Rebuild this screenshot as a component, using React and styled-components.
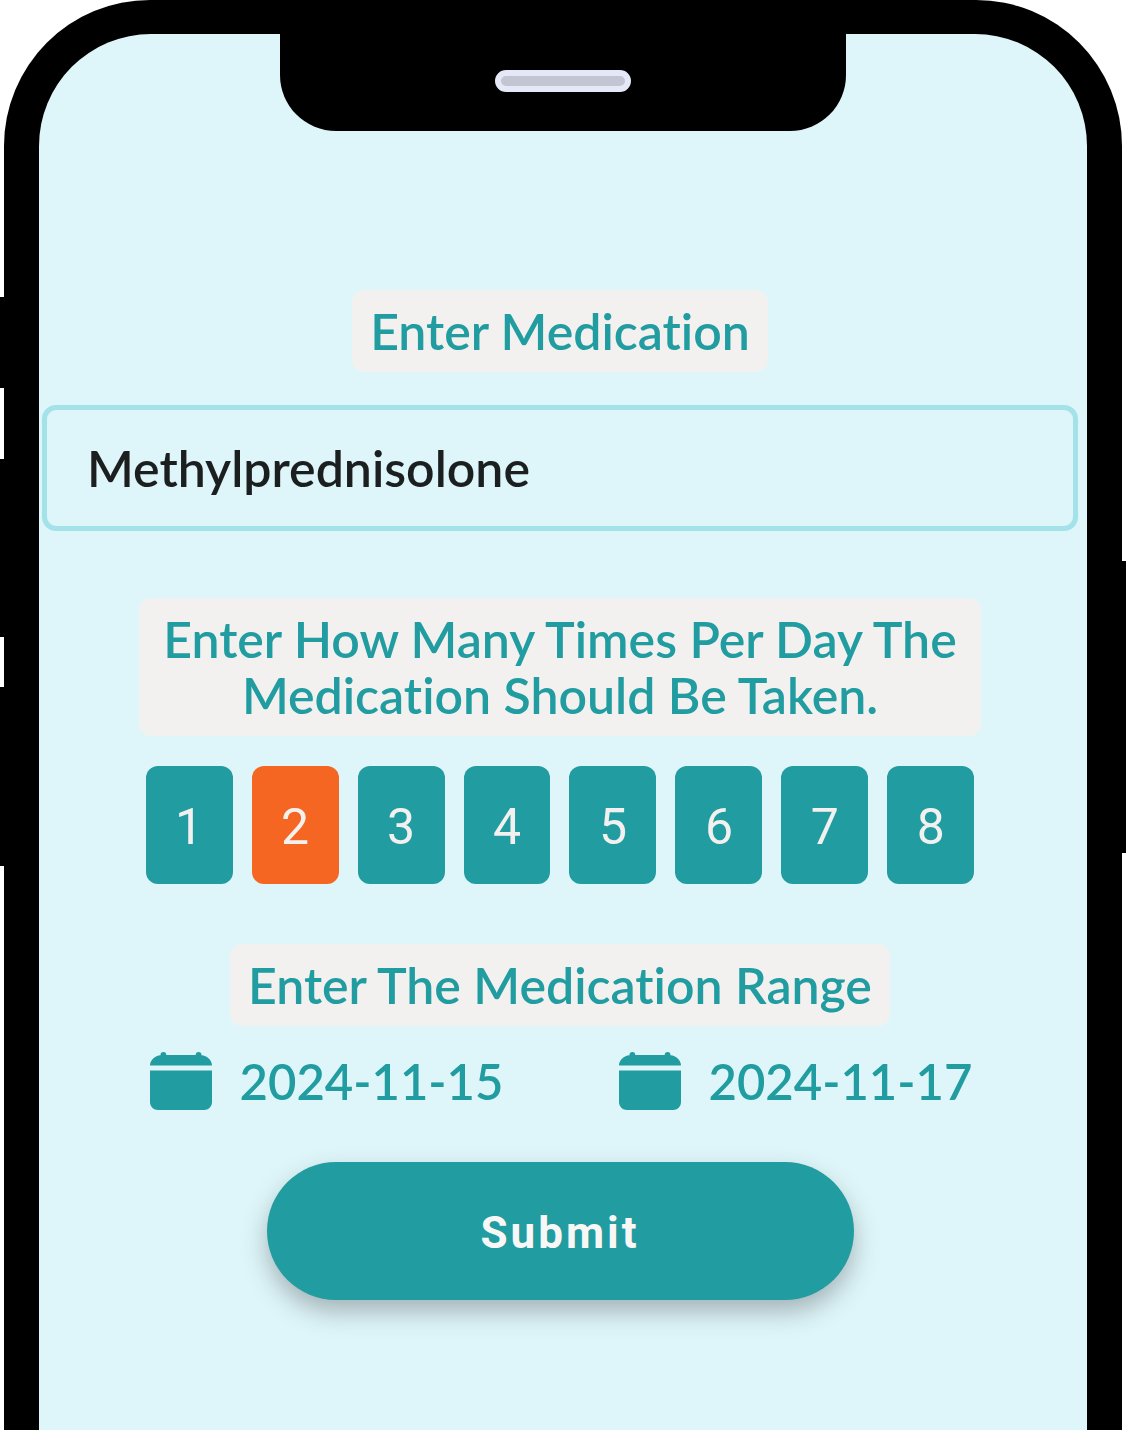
import styled, { createGlobalStyle } from "styled-components";
import { useState } from "react";

const doses = [1, 2, 3, 4, 5, 6, 7, 8];

function CalendarIcon() {
  return (
    <svg width="62" height="58" viewBox="0 0 62 58" aria-hidden="true">
      <path
        fill="#219ca0"
        d="M0 13.5C0 8 5 3.5 10.5 3.2C10.5 1 11.5 0 13.4 0S16.3 1 16.3 3H45.7C45.7 1 46.7 0 48.6 0S51.5 1 51.5 3.2C57 3.5 62 8 62 13.5Z"
      />
      <path
        fill="#219ca0"
        d="M0 18.5H62V50C62 54.5 58.5 58 54 58H8C3.5 58 0 54.5 0 50Z"
      />
    </svg>
  );
}

function App() {
  const [medication, setMedication] = useState("Methylprednisolone");
  const [times, setTimes] = useState(2);

  const handleSubmit = (e) => {
    e.preventDefault();
  };

  return (
    <Phone>
      <GlobalStyle />
      <SideButton $side="left" $top={297} $height={91} />
      <SideButton $side="left" $top={459} $height={178} />
      <SideButton $side="left" $top={687} $height={179} />
      <SideButton $side="right" $top={561} $height={292} />
      <Screen>
        <Notch>
          <Speaker />
        </Notch>
        <Form onSubmit={handleSubmit}>
          <Label as="label" htmlFor="medication">
            Enter Medication
          </Label>
          <MedicationInput
            id="medication"
            value={medication}
            spellCheck={false}
            onChange={(e) => setMedication(e.target.value)}
          />
          <Label id="times">
            Enter How Many Times Per Day The Medication Should Be Taken.
          </Label>
          <DoseRow role="group" aria-labelledby="times">
            {doses.map((dose) => (
              <DoseButton
                key={dose}
                type="button"
                $active={dose === times}
                aria-pressed={dose === times}
                onClick={() => setTimes(dose)}
              >
                {dose}
              </DoseButton>
            ))}
          </DoseRow>
          <Label id="range">Enter The Medication Range</Label>
          <DateRow role="group" aria-labelledby="range">
            <DateButton type="button">
              <CalendarIcon />
              2024-11-15
            </DateButton>
            <DateButton type="button">
              <CalendarIcon />
              2024-11-17
            </DateButton>
          </DateRow>
          <SubmitButton type="submit">Submit</SubmitButton>
        </Form>
      </Screen>
    </Phone>
  );
}

export default App;

const GlobalStyle = createGlobalStyle`
  * {
    box-sizing: border-box;
  }
  body {
    margin: 0;
    background-color: white;
    font-family: Lato, sans-serif;
    font-variant-ligatures: none;
  }
`;

const Phone = styled.div`
  position: relative;
  display: flex;
  min-height: 100vh;
  margin: 0 4px;
  padding: 34px 35px 0;
  border-radius: 146px 146px 0 0;
  background-color: black;
`;

const SideButton = styled.span`
  position: absolute;
  ${(props) => props.$side}: -4px;
  top: ${(props) => props.$top}px;
  width: 4px;
  height: ${(props) => props.$height}px;
  background-color: black;
`;

const Screen = styled.main`
  display: flex;
  flex-direction: column;
  flex: 1;
  align-items: center;
  border-radius: 112px 112px 0 0;
  background-color: #def6f9;
`;

const Notch = styled.div`
  display: flex;
  justify-content: center;
  align-items: center;
  width: 54%;
  height: 97px;
  padding-bottom: 4px;
  border-radius: 0 0 56px 56px;
  background-color: black;
`;

const Speaker = styled.div`
  width: 136px;
  height: 22px;
  border: solid #e5e8f7 6px;
  border-radius: 11px;
  background-color: #c4c5d2;
`;

const Form = styled.form`
  display: flex;
  flex-direction: column;
  align-items: center;
  width: 100%;
  padding: 159px 9px 60px 3px;
`;

const Label = styled.div`
  max-width: 842px;
  padding: 13px 18px;
  border-radius: 12px;
  background-color: #f3f1ef;
  color: #219ca0;
  font-size: 50px;
  font-weight: 600;
  line-height: 56px;
  text-align: center;
`;

const MedicationInput = styled.input`
  width: 100%;
  height: 126px;
  margin: 33px 0 67px;
  padding: 0 40px;
  border: solid #a3e2e8 5px;
  border-radius: 14px;
  background-color: transparent;
  color: #1b1f20;
  font-family: inherit;
  font-size: 50px;
  font-weight: 600;
  outline: none;
`;

const DoseRow = styled.div`
  display: grid;
  grid-template-columns: repeat(8, 1fr);
  gap: 19px;
  width: 80%;
  margin: 30px 0 60px;
`;

const DoseButton = styled.button`
  height: 118px;
  padding: 4px 0 0;
  border: none;
  border-radius: 12px;
  background-color: ${(props) => (props.$active ? "#f46621" : "#219ca0")};
  color: #f3f1ef;
  font-family: Roboto, sans-serif;
  font-size: 50px;
  cursor: pointer;
`;

const DateRow = styled.div`
  display: flex;
  justify-content: space-between;
  width: 80%;
  margin: 26px 0 52px;
  padding: 0 2px 0 4px;
`;

const DateButton = styled.button`
  display: flex;
  align-items: center;
  gap: 28px;
  padding: 0;
  border: none;
  background-color: transparent;
  color: #219ca0;
  font-family: inherit;
  font-size: 49px;
  font-weight: 600;
  cursor: pointer;
`;

const SubmitButton = styled.button`
  width: 587px;
  max-width: 100%;
  height: 138px;
  padding-top: 4px;
  border: none;
  border-radius: 69px;
  background-color: #219ca0;
  box-shadow: 0 12px 24px rgba(60, 60, 70, 0.35);
  color: #f9f7f6;
  font-family: Roboto, sans-serif;
  font-size: 44px;
  font-weight: 700;
  letter-spacing: 3px;
  cursor: pointer;
`;
